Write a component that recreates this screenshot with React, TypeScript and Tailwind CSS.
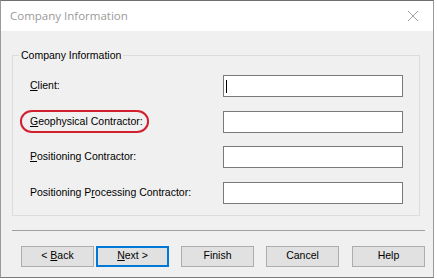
const fields = [
  { pre: "", key: "C", post: "lient:" },
  { pre: "", key: "G", post: "eophysical Contractor:", marked: true },
  { pre: "", key: "P", post: "ositioning Contractor:" },
  { pre: "Positioning P", key: "r", post: "ocessing Contractor:" },
];

const buttons = [
  { label: ["< ", "B", "ack"], cls: "ml-[9px]" },
  { label: ["", "N", "ext >"], cls: "ml-[2px] border-2 border-[#0078d7]", focus: true },
  { label: ["Finish", "", ""], cls: "ml-[12px]" },
  { label: ["Cancel", "", ""], cls: "ml-[12px]" },
  { label: ["Help", "", ""], cls: "ml-[13px]" },
];

const sans = "font-['Liberation_Sans',Arial,sans-serif]";

export default function App() {
  return (
    <div className="w-[437px] h-[279px] bg-white">
      <div className="w-[434px] h-[278px] flex flex-col border border-[#9a9a9a] border-t-[#6f6f6f] border-b-[#7a7a7a] bg-[#f0f0f0]">
        {/* Title bar */}
        <div className="h-[30px] bg-white flex items-center justify-between pl-[9px] pr-[14px]">
          <span className="font-['Open_Sans',sans-serif] text-[11.5px] text-[#9a9a9a]">
            Company Information
          </span>
          <svg width="12" height="12" viewBox="0 0 12 12">
            <path d="M1 1 L11 11 M11 1 L1 11" stroke="#a0a0a0" strokeWidth="1" fill="none" />
          </svg>
        </div>

        {/* Body */}
        <div className={`flex-1 flex flex-col pl-[11px] pr-[8px] ${sans} text-[10.5px] text-black`}>
          <div className="relative mt-[24px] w-[408px] border border-[#dcdcdc] pt-[19px] pb-[11px] pl-[17px] pr-[16px]">
            <span className="absolute -top-[7px] left-[6px] px-[2px] bg-[#f0f0f0] leading-[13px]">
              Company Information
            </span>
            <div className="flex flex-col gap-[13.5px]">
              {fields.map((f, i) => (
                <div key={i} className="h-[22px] flex items-center justify-between">
                  {f.marked ? (
                    <span className="-ml-[10px] h-[23px] pl-[8px] pr-[4px] flex items-center border-2 border-[#d21f2e] rounded-[12px/11px]">
                      {f.pre}<u>{f.key}</u>{f.post}
                    </span>
                  ) : (
                    <span>
                      {f.pre}<u>{f.key}</u>{f.post}
                    </span>
                  )}
                  <div className="w-[180px] h-[22px] bg-white border border-[#7a7a7a] flex items-center">
                    {i === 0 && <div className="ml-[2px] w-px h-[13px] bg-black" />}
                  </div>
                </div>
              ))}
            </div>
          </div>

          <div className="mt-[14px] h-px bg-[#a0a0a0]" />

          <div className="mt-[15px] flex">
            {buttons.map((b, i) => (
              <div
                key={i}
                className={`w-[73px] h-[21px] flex items-center justify-center bg-[#e1e1e1] ${
                  b.focus ? "" : "border border-[#adadad]"
                } ${b.cls}`}
              >
                <span>
                  {b.label[0]}
                  {b.label[1] && <u>{b.label[1]}</u>}
                  {b.label[2]}
                </span>
              </div>
            ))}
          </div>
        </div>
      </div>
    </div>
  );
}
